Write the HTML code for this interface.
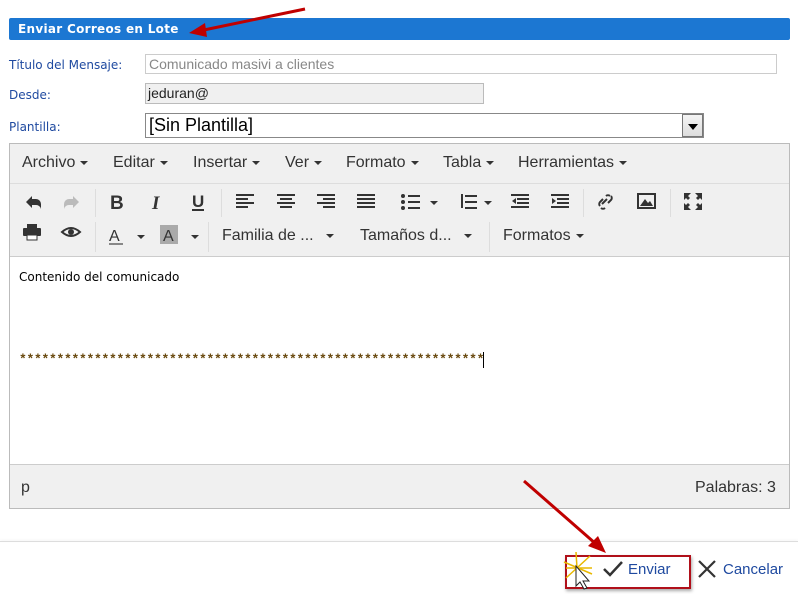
<!DOCTYPE html>
<html><head><meta charset="utf-8"><style>
*{box-sizing:border-box;margin:0;padding:0}
body{width:798px;height:594px;background:#fff;font-family:"Liberation Sans",sans-serif;position:relative;overflow:hidden}
.a{position:absolute}
.lbl{font-family:"DejaVu Sans",sans-serif;font-size:12px;color:#1f4aa0}
.mi{position:absolute;top:154px;font-size:16px;color:#333}
.car{display:inline-block;width:0;height:0;border-left:4px solid transparent;border-right:4px solid transparent;border-top:4px solid #333;vertical-align:middle;margin-left:5px}
.sep{position:absolute;width:1px;background:#ddd}
</style></head><body>
<div class="a" style="left:9px;top:18px;width:781px;height:22px;background:#1c77d2;border-radius:2px"></div>
<div class="a" style="left:18px;top:22px;font-family:'DejaVu Sans',sans-serif;font-size:12px;font-weight:bold;color:#fff;letter-spacing:0.3px">Enviar Correos en Lote</div>
<svg class="a" style="left:185px;top:5px" width="125" height="35"><line x1="120" y1="4" x2="14" y2="26" stroke="#c00000" stroke-width="3"/><polygon points="4,28 20,18 22,32" fill="#c00000"/></svg>
<div class="a lbl" style="left:9px;top:58px">Título del Mensaje:</div>
<div class="a" style="left:145px;top:54px;width:632px;height:20px;border:1px solid #ccc;font-size:14px;color:#888;padding:1px 3px">Comunicado masivi a clientes</div>
<div class="a lbl" style="left:9px;top:88px">Desde:</div>
<div class="a" style="left:145px;top:83px;width:339px;height:21px;border:1px solid #bbb;background:#f0f0f0;font-size:14px;color:#222;padding:1px 2px">jeduran@</div>
<div class="a lbl" style="left:9px;top:120px">Plantilla:</div>
<div class="a" style="left:145px;top:113px;width:559px;height:25px;border:1px solid #888;font-size:18px;color:#000;padding:1px 3px">[Sin Plantilla]</div>
<div class="a" style="left:682px;top:114px;width:21px;height:23px;border:1px solid #777;background:linear-gradient(#f4f4f4,#ddd)"><div style="margin:9px auto 0;width:0;height:0;border-left:5px solid transparent;border-right:5px solid transparent;border-top:6px solid #000"></div></div>
<div class="a" style="left:9px;top:143px;width:781px;height:366px;border:1px solid #bbb;background:#f0f0f0"></div>
<div class="a" style="left:10px;top:183px;width:779px;height:1px;background:#ddd"></div>
<div class="mi" style="left:22px">Archivo<span class="car"></span></div>
<div class="mi" style="left:113px">Editar<span class="car"></span></div>
<div class="mi" style="left:193px">Insertar<span class="car"></span></div>
<div class="mi" style="left:285px">Ver<span class="car"></span></div>
<div class="mi" style="left:346px">Formato<span class="car"></span></div>
<div class="mi" style="left:443px">Tabla<span class="car"></span></div>
<div class="mi" style="left:518px">Herramientas<span class="car"></span></div>
<svg class="a" style="left:10px;top:186px" width="780" height="70" fill="#333" stroke="#333">
<path d="M16 16 l6 -6 v3 h4 a5 5 0 0 1 5 5 v5 a5 5 0 0 0 -5 -4 h-4 v3z" stroke="none"/>
<path d="M69 16 l-6 -6 v3 h-4 a5 5 0 0 0 -5 5 v5 a5 5 0 0 1 5 -4 h4 v3z" fill="#bbb" stroke="none"/>
<text x="100" y="23" font-size="19" font-weight="bold" font-family="Liberation Sans" stroke="none">B</text>
<text x="142" y="23" font-size="19" font-weight="bold" font-style="italic" font-family="Liberation Serif" stroke="none">I</text>
<text x="182" y="21" font-size="17" font-weight="bold" font-family="Liberation Sans" stroke="none">U</text><rect x="182" y="23" width="12" height="2" stroke="none"/>
<g stroke="none"><rect x="226" y="8" width="18" height="2"/><rect x="226" y="12" width="12" height="2"/><rect x="226" y="16" width="18" height="2"/><rect x="226" y="20" width="12" height="2"/>
<rect x="267" y="8" width="18" height="2"/><rect x="270" y="12" width="12" height="2"/><rect x="267" y="16" width="18" height="2"/><rect x="270" y="20" width="12" height="2"/>
<rect x="307" y="8" width="18" height="2"/><rect x="313" y="12" width="12" height="2"/><rect x="307" y="16" width="18" height="2"/><rect x="313" y="20" width="12" height="2"/>
<rect x="347" y="8" width="18" height="2"/><rect x="347" y="12" width="18" height="2"/><rect x="347" y="16" width="18" height="2"/><rect x="347" y="20" width="18" height="2"/>
<circle cx="393" cy="10" r="2"/><circle cx="393" cy="16" r="2"/><circle cx="393" cy="22" r="2"/><rect x="398" y="9" width="12" height="2"/><rect x="398" y="15" width="12" height="2"/><rect x="398" y="21" width="12" height="2"/>
<polygon points="420,15 428,15 424,19"/>
<rect x="451" y="8" width="2" height="14"/><rect x="455" y="9" width="12" height="2"/><rect x="455" y="15" width="12" height="2"/><rect x="455" y="21" width="12" height="2"/>
<polygon points="474,15 482,15 478,19"/>
<rect x="501" y="8" width="18" height="2"/><rect x="507" y="12" width="12" height="2"/><rect x="507" y="16" width="12" height="2"/><rect x="501" y="20" width="18" height="2"/><polygon points="506,12 506,18 502,15"/>
<rect x="541" y="8" width="18" height="2"/><rect x="547" y="12" width="12" height="2"/><rect x="547" y="16" width="12" height="2"/><rect x="541" y="20" width="18" height="2"/><polygon points="542,12 542,18 546,15"/></g>
<path d="M592 18 l5 -5 M590 20 a3 3 0 0 1 0-4 l3-3 M600 10 a3 3 0 0 0 -4 0 M595 22 a3 3 0 0 1 -4 0 M601 10 a3 3 0 0 1 0 4 l-3 3" fill="none" stroke-width="2"/>
<rect x="628" y="8" width="17" height="14" fill="none" stroke-width="2"/><polygon points="630,20 635,13 638,17 640,15 643,20" stroke="none"/>
<g stroke="none"><polygon points="674,7 681,7 678,10 680,12 678,14 676,12 674,14"/><polygon points="692,7 685,7 688,10 686,12 688,14 690,12 692,14"/><polygon points="674,24 681,24 678,21 680,19 678,17 676,19 674,17"/><polygon points="692,24 685,24 688,21 686,19 688,17 690,19 692,17"/></g>
<g stroke="none"><rect x="13" y="42" width="18" height="8" rx="1"/><rect x="17" y="38" width="10" height="4"/><rect x="17" y="49" width="10" height="5" fill="#fff" stroke="#333"/>
<path d="M52 46 q9 -8 18 0 q-9 8 -18 0z" fill="none" stroke="#333" stroke-width="2"/><circle cx="61" cy="46" r="3"/>
<text x="99" y="55" font-size="16" font-family="Liberation Sans">A</text><rect x="99" y="57" width="14" height="2" fill="#888"/>
<polygon points="127,49 135,49 131,53"/>
<rect x="150" y="39" width="18" height="19" fill="#aaa"/><text x="153" y="55" font-size="16" font-family="Liberation Sans">A</text>
<polygon points="181,49 189,49 185,53"/></g>
</svg>
<div class="sep" style="left:95px;top:189px;height:28px"></div>
<div class="sep" style="left:221px;top:189px;height:28px"></div>
<div class="sep" style="left:583px;top:189px;height:28px"></div>
<div class="sep" style="left:670px;top:189px;height:28px"></div>
<div class="sep" style="left:95px;top:222px;height:30px"></div>
<div class="sep" style="left:208px;top:222px;height:30px"></div>
<div class="sep" style="left:489px;top:222px;height:30px"></div>
<div class="mi" style="left:222px;top:227px">Familia de ...<span class="car" style="margin-left:12px"></span></div>
<div class="mi" style="left:360px;top:227px">Tamaños d...<span class="car" style="margin-left:12px"></span></div>
<div class="mi" style="left:503px;top:227px">Formatos<span class="car"></span></div>
<div class="a" style="left:10px;top:256px;width:779px;height:209px;background:#fff;border-top:1px solid #ccc;border-bottom:1px solid #ccc"></div>
<div class="a" style="left:19px;top:270px;font-family:'DejaVu Sans',sans-serif;font-size:12px;color:#000">Contenido del comunicado</div>
<div class="a" style="left:19px;top:352px;font-family:'Liberation Mono',monospace;font-size:13px;font-weight:bold;color:#6a4a10;letter-spacing:-0.3px;white-space:nowrap;overflow:hidden;width:464px">**************************************************************</div>
<div class="a" style="left:483px;top:352px;width:1px;height:16px;background:#000"></div>
<div class="a" style="left:21px;top:479px;font-size:16px;color:#333">p</div>
<div class="a" style="left:695px;top:479px;font-size:16px;color:#333">Palabras: 3</div>
<div class="a" style="left:0;top:541px;width:798px;height:1px;background:#ddd;box-shadow:0 -1px 2px #eee"></div>
<svg class="a" style="left:520px;top:478px" width="90" height="80"><line x1="4" y1="3" x2="76" y2="66" stroke="#c00000" stroke-width="3"/><polygon points="86,75 68,68 78,58" fill="#c00000"/></svg>
<div class="a" style="left:565px;top:555px;width:126px;height:34px;border:2px solid #b0101a;box-shadow:1px 2px 3px #aaa"></div>
<svg class="a" style="left:562px;top:548px" width="40" height="44"><g stroke="#e8b800" stroke-width="1.5"><line x1="14" y1="4" x2="16" y2="36"/><line x1="2" y1="14" x2="30" y2="26"/><line x1="4" y1="30" x2="28" y2="8"/><line x1="4" y1="20" x2="30" y2="20"/></g><path d="M14 18 v20 l4 -4 l4 7 l3 -1 l-4 -7 h6z" fill="#fff" stroke="#222"/></svg>
<svg class="a" style="left:602px;top:559px" width="22" height="20"><path d="M2 10 l6 6 l12 -13" fill="none" stroke="#333" stroke-width="2.5"/></svg>
<div class="a" style="left:628px;top:561px;font-size:15px;color:#1f4aa0">Enviar</div>
<svg class="a" style="left:697px;top:559px" width="20" height="20"><path d="M2 2 L18 18 M18 2 L2 18" stroke="#333" stroke-width="2.2"/></svg>
<div class="a" style="left:723px;top:561px;font-size:15px;color:#1f4aa0">Cancelar</div>
</body></html>
